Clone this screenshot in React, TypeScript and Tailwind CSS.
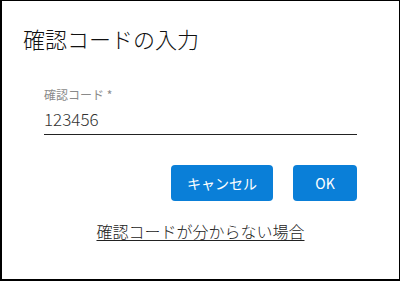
const jp = "font-['Noto_Sans_CJK_JP',sans-serif]"

export default function App() {
  return (
    <div className={`${jp} box-border flex h-[281px] w-[400px] flex-col border-t border-r border-b-2 border-l-2 border-black bg-white font-light`}>
      <h1 className="mt-[24px] pl-[21px] text-[22px] leading-[26px] text-[#111]">確認コードの入力</h1>

      <div className="mx-[42px] mt-[37px] flex flex-col">
        <label className="text-[12px] leading-[14px] font-normal text-[#8a8a8a]">確認コード *</label>
        <div className="mt-[5px] border-b border-[#222] pb-[3px] text-[17px] leading-[24px] text-[#333]">123456</div>
      </div>

      <div className="mx-[42px] mt-[30px] flex justify-end gap-[20px]">
        <button className="h-[36px] w-[102px] rounded-[4px] bg-[#0a7fd8] text-[14px] font-normal text-white">キャンセル</button>
        <button className="h-[36px] w-[64px] rounded-[4px] bg-[#0a7fd8] text-[14px] font-normal text-white">OK</button>
      </div>

      <div className="mt-[20px] flex justify-center">
        <a className="text-[16px] leading-[20px] text-[#222] underline underline-offset-[2px]">確認コードが分からない場合</a>
      </div>
    </div>
  )
}
